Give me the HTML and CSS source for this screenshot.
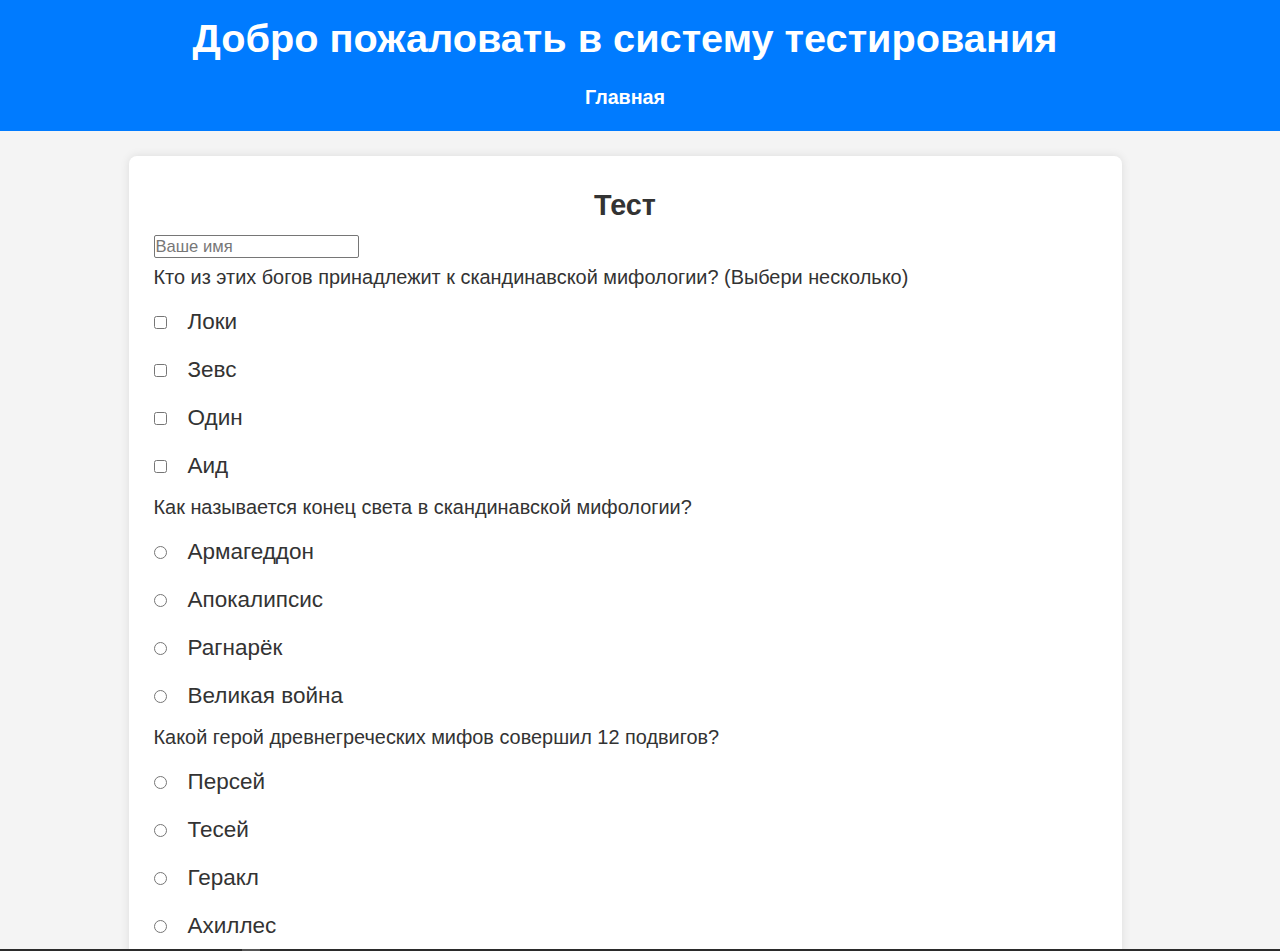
FILE: index.html
```html
<!DOCTYPE html>
<html lang="ru">
<head>
<meta charset="utf-8">
<title>Тест</title>
<link rel="stylesheet" href="styles.css">
</head>
<body>
<header class="site-header">
  <h1 class="site-title">Добро пожаловать в систему тестирования</h1>
  <nav class="site-nav"><a href="#" class="nav-link">Главная</a></nav>
</header>
<main class="main">
  <form class="card">
    <h2 class="card-title">Тест</h2>
    <input class="name-input" type="text" placeholder="Ваше имя">
    <p class="question">Кто из этих богов принадлежит к скандинавской мифологии? (Выбери несколько)</p>
    <label class="option"><input type="checkbox" class="ctl"><span>Локи</span></label>
    <label class="option"><input type="checkbox" class="ctl"><span>Зевс</span></label>
    <label class="option"><input type="checkbox" class="ctl"><span>Один</span></label>
    <label class="option"><input type="checkbox" class="ctl"><span>Аид</span></label>
    <p class="question">Как называется конец света в скандинавской мифологии?</p>
    <label class="option"><input type="radio" name="q2" class="ctl"><span>Армагеддон</span></label>
    <label class="option"><input type="radio" name="q2" class="ctl"><span>Апокалипсис</span></label>
    <label class="option"><input type="radio" name="q2" class="ctl"><span>Рагнарёк</span></label>
    <label class="option"><input type="radio" name="q2" class="ctl"><span>Великая война</span></label>
    <p class="question">Какой герой древнегреческих мифов совершил 12 подвигов?</p>
    <label class="option"><input type="radio" name="q3" class="ctl"><span>Персей</span></label>
    <label class="option"><input type="radio" name="q3" class="ctl"><span>Тесей</span></label>
    <label class="option"><input type="radio" name="q3" class="ctl"><span>Геракл</span></label>
    <label class="option"><input type="radio" name="q3" class="ctl"><span>Ахиллес</span></label>
  </form>
</main>
<div class="bottom-bar"><span class="bottom-thumb"></span></div>
</body>
</html>
```
FILE: styles.css
```css
html, body {
  margin: 0;
  padding: 0;
}
body {
  background: #f4f4f4;
  font-family: "Liberation Sans", Arial, sans-serif;
  color: #333;
}
.site-header {
  background: #007bff;
  color: #fff;
  height: 131px;
  box-sizing: border-box;
  padding: 14px 30px 0 0;
  text-align: center;
}
.site-title {
  margin: 0;
  font-size: 39.7px;
  line-height: 48px;
  font-weight: bold;
}
.site-nav {
  margin-top: 24px;
}
.nav-link {
  color: #fff;
  text-decoration: none;
  font-weight: bold;
  font-size: 19.7px;
  line-height: 22px;
}
.main {
  padding: 25px 30px 40px 0;
}
.card {
  width: 993px;
  box-sizing: border-box;
  margin: 0 auto;
  background: #fff;
  border-radius: 8px;
  box-shadow: 0 0 10px rgba(0, 0, 0, 0.1);
  padding: 20px 25px 20px;
}
.card-title {
  margin: 14px 0 15px;
  text-align: center;
  font-size: 28.8px;
  line-height: 30px;
  font-weight: bold;
}
.name-input {
  display: block;
  width: 205px;
  height: 23px;
  box-sizing: border-box;
  margin: 0;
  padding: 1px 1px;
  font-family: "Liberation Sans", Arial, sans-serif;
  font-size: 16.6px;
  border: 1px solid #767676;
  border-radius: 2px;
}
.name-input::placeholder {
  color: #777;
}
.question {
  margin: 9px 0 11px;
  font-size: 19.9px;
  line-height: 20px;
}
.option + .question {
  margin-top: 7px;
}
.option {
  display: flex;
  align-items: center;
  height: 48px;
  font-size: 22.5px;
}
.ctl {
  width: 13px;
  height: 13px;
  margin: 0 21px 0 0;
}
.bottom-bar {
  position: fixed;
  left: 0;
  right: 0;
  bottom: 0;
  height: 2px;
  background: #2b2b2b;
}
.bottom-thumb {
  position: absolute;
  left: 242px;
  width: 18px;
  top: 0;
  height: 2px;
  background: #555;
}
```
